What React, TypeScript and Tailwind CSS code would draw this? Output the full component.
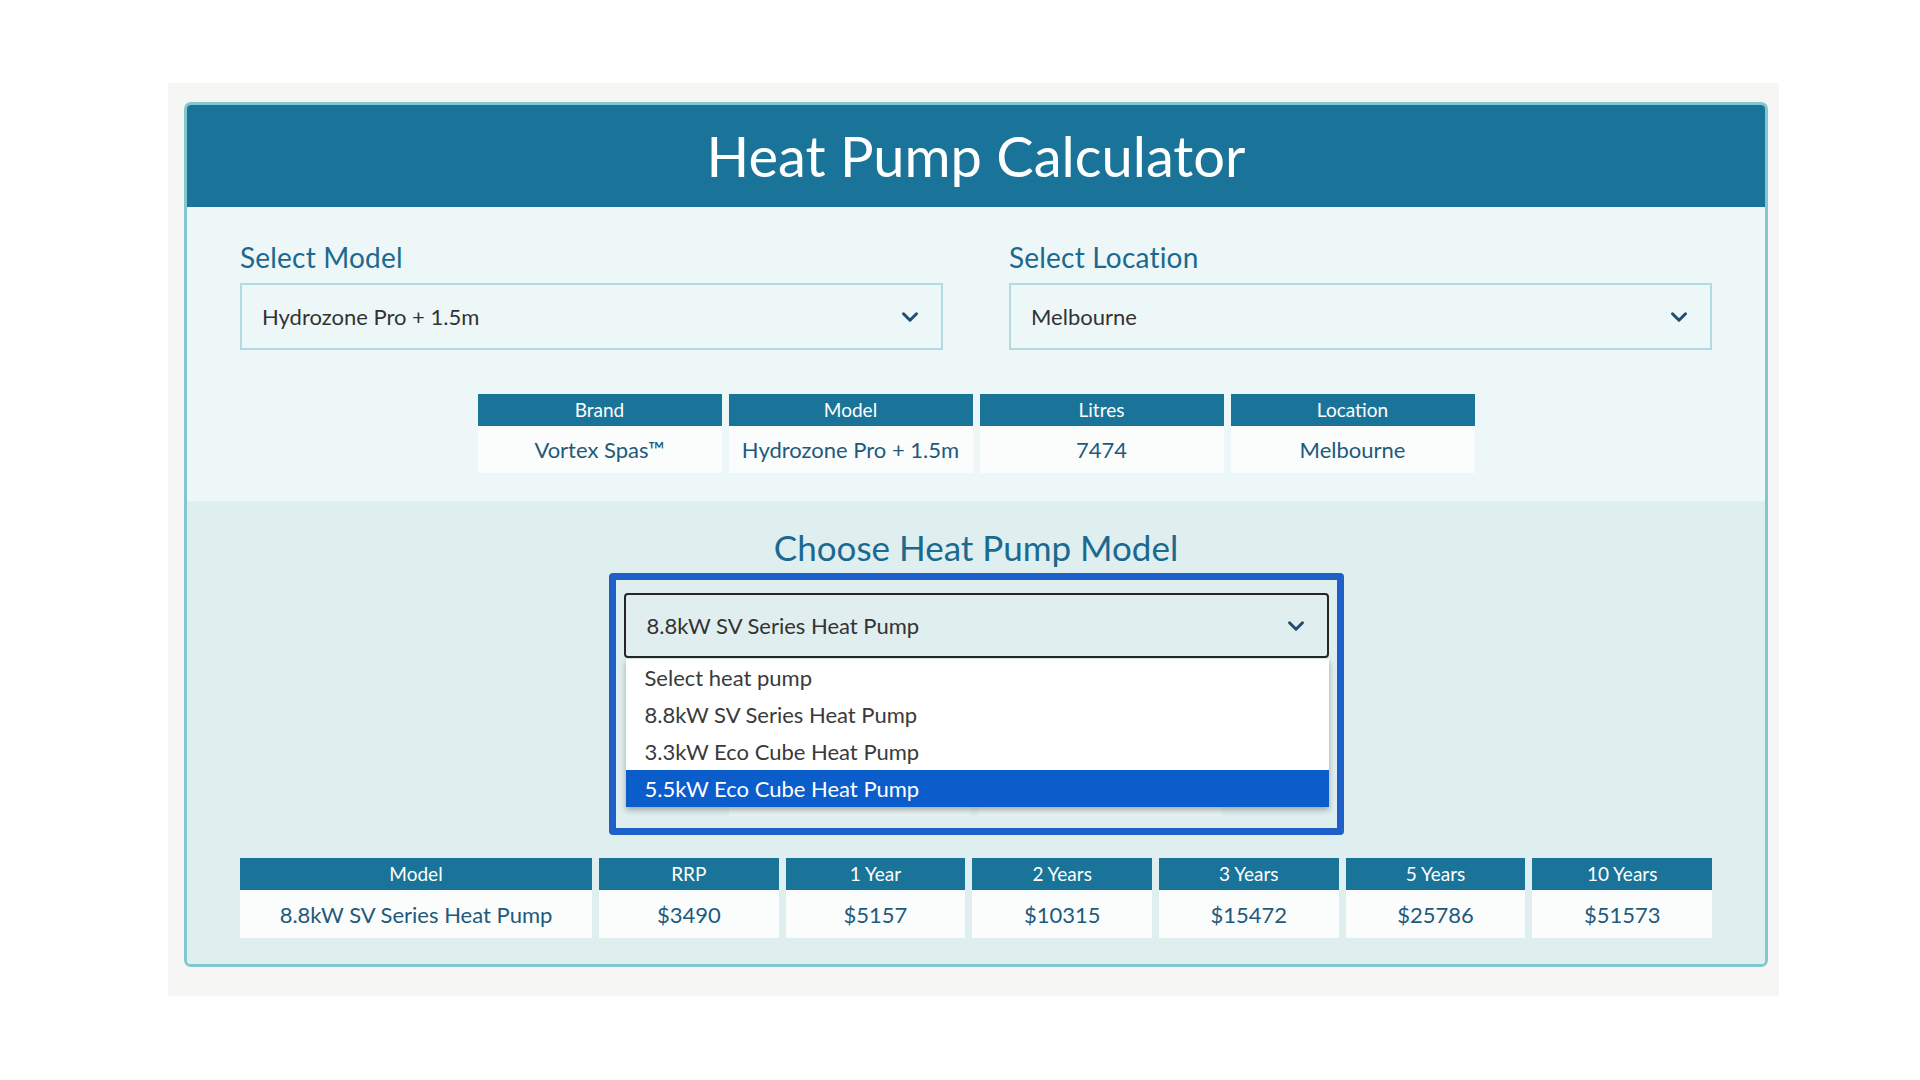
import { ChevronDown } from "lucide-react"

const info = [
    { label: "Brand", value: "Vortex Spas™" },
    { label: "Model", value: "Hydrozone Pro + 1.5m" },
    { label: "Litres", value: "7474" },
    { label: "Location", value: "Melbourne" },
]

const costs = [
    { label: "Model", value: "8.8kW SV Series Heat Pump" },
    { label: "RRP", value: "$3490" },
    { label: "1 Year", value: "$5157" },
    { label: "2 Years", value: "$10315" },
    { label: "3 Years", value: "$15472" },
    { label: "5 Years", value: "$25786" },
    { label: "10 Years", value: "$51573" },
]

const pumps = [
    "Select heat pump",
    "8.8kW SV Series Heat Pump",
    "3.3kW Eco Cube Heat Pump",
    "5.5kW Eco Cube Heat Pump",
]

function Chevron() {
    return <ChevronDown className="w-[26px] h-[26px] text-[#1d4e74]" strokeWidth={2.8} />
}

function SelectBox({ label, value }: { label: string, value: string }) {
    return (
        <div className="flex flex-col">
            <span className="text-[28px] leading-[34px] text-[#1b6990] mb-[9px] tracking-[0.2px]">{label}</span>
            <div className="h-[67px] border-2 border-[#b2dae0] bg-[#eef7f8] flex items-center justify-between pl-[20px] pr-[18px]">
                <span className="text-[22px] text-[#333]">{value}</span>
                <Chevron />
            </div>
        </div>
    )
}

export default function App() {
    return (
        <div className="w-full min-h-screen bg-white pt-[83px] pl-[168px]" style={{ fontFamily: "Lato, 'Open Sans', sans-serif" }}>
            <div className="w-[1611px] h-[913px] bg-[#f6f6f5] pl-[16px] pt-[19px]">
                <div className="w-[1584px] border-[3px] border-[#80c7d1] rounded-[7px] overflow-hidden">
                    {/* header */}
                    <div className="h-[102px] bg-[#1a7499] flex items-center justify-center">
                        <h1 className="text-[56px] text-white leading-none">Heat Pump Calculator</h1>
                    </div>

                    {/* model + location */}
                    <div className="bg-[#eef7f7] px-[53px] pt-[33px] pb-[28px]">
                        <div className="grid grid-cols-2 gap-x-[66px]">
                            <SelectBox label="Select Model" value="Hydrozone Pro + 1.5m" />
                            <SelectBox label="Select Location" value="Melbourne" />
                        </div>
                        <div className="mt-[44px] flex justify-center">
                            <div className="grid grid-cols-4 gap-x-[7px] w-[997px]">
                                {info.map((c) => (
                                    <div key={c.label} className="flex flex-col">
                                        <div className="h-[32px] bg-[#1a7499] text-white text-[19px] flex items-center justify-center">{c.label}</div>
                                        <div className="h-[47px] bg-[#fbfdfd] text-[#1e5a7c] text-[22px] flex items-center justify-center">{c.value}</div>
                                    </div>
                                ))}
                            </div>
                        </div>
                    </div>

                    {/* heat pump */}
                    <div className="bg-[#dfeeef] px-[53px] pt-[25px] pb-[26px] flex flex-col items-center">
                        <h2 className="text-[35px] leading-[42px] text-[#1b6990] mb-[5px]">Choose Heat Pump Model</h2>
                        <div className="w-[735px] border-[7px] border-[#1f5fc8] rounded-[4px] px-[8px] pt-[13px]">
                            <div className="relative">
                                <div className="h-[65px] border-2 border-[#262626] rounded-[4px] bg-[#e0eeef] flex items-center justify-between pl-[21px] pr-[18px]">
                                    <span className="text-[22px] text-[#333]">8.8kW SV Series Heat Pump</span>
                                    <Chevron />
                                </div>
                                <div className="h-[170px] flex items-end pb-[12px] pl-[105px] gap-x-[8px]">
                                    <div className="w-[241px] h-[9px] bg-[#e9f3f4]" />
                                    <div className="w-[244px] h-[9px] bg-[#e9f3f4]" />
                                </div>
                                <ul className="absolute left-[2px] right-0 top-[66px] bg-white shadow-[0_3px_6px_rgba(0,0,0,0.3)]">
                                    {pumps.map((p, i) => (
                                        <li
                                            key={p}
                                            className={`h-[37px] flex items-center pl-[19px] text-[22px] ${i === 3 ? "bg-[#0b5dcc] text-white" : "text-[#3a3a3a]"}`}
                                        >
                                            {p}
                                        </li>
                                    ))}
                                </ul>
                            </div>
                        </div>

                        <div className="mt-[23px] w-full grid grid-cols-[352px_repeat(6,1fr)] gap-x-[7px]">
                            {costs.map((c) => (
                                <div key={c.label} className="flex flex-col">
                                    <div className="h-[32px] bg-[#1a7499] text-white text-[19px] flex items-center justify-center">{c.label}</div>
                                    <div className="h-[48px] bg-[#fbfdfd] text-[#1e5a7c] text-[22px] flex items-center justify-center">{c.value}</div>
                                </div>
                            ))}
                        </div>
                    </div>
                </div>
            </div>
        </div>
    )
}
